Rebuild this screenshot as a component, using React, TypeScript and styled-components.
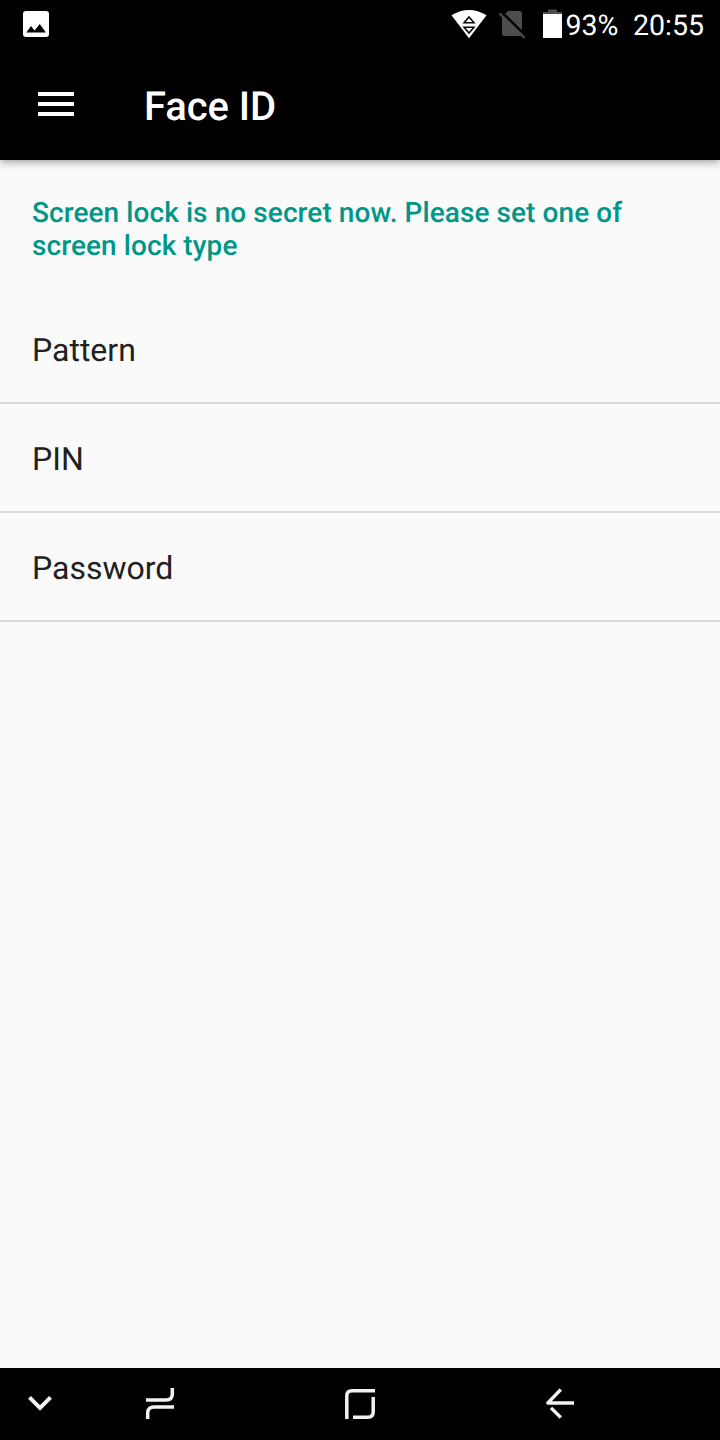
import React from "react";
import styled, { createGlobalStyle } from "styled-components";

const GlobalStyle = createGlobalStyle`
  * { box-sizing: border-box; }
  body {
    margin: 0;
    background: #fafafa;
    font-family: Roboto, sans-serif;
    text-rendering: geometricPrecision;
  }
  svg { display: block; flex: none; }
`;

const Screen = styled.div`
  display: flex;
  flex-direction: column;
  width: 720px;
  height: 1440px;
  overflow: hidden;
  background: #fafafa;
`;

const Header = styled.header`
  flex: none;
  height: 160px;
  background: #000;
  color: #fff;
  box-shadow: 0 2px 8px rgba(0, 0, 0, 0.38);
`;

const StatusBar = styled.div`
  display: flex;
  justify-content: space-between;
  height: 48px;
  padding: 0 16px 0 23px;
`;

const StatusGroup = styled.div`
  display: flex;
`;

const StatusText = styled.span<{ $width: number }>`
  width: ${(p) => p.$width}px;
  font-size: 28.5px;
  line-height: 52px;
  text-align: right;
  white-space: nowrap;
`;

const Toolbar = styled.div`
  display: flex;
  height: 112px;
  padding-left: 38px;
`;

const MenuButton = styled.button`
  display: flex;
  width: 106px;
  padding: 44px 0 0;
  border: 0;
  background: none;
`;

const Title = styled.h1`
  margin: 0;
  font-size: 40px;
  font-weight: 500;
  line-height: 118px;
  letter-spacing: -0.1px;
`;

const Content = styled.main`
  flex: 1;
`;

const Notice = styled.p`
  margin: 0;
  height: 135px;
  padding: 36px 32px 0;
  color: #009688;
  font-size: 28px;
  font-weight: 500;
  line-height: 33px;
  letter-spacing: 0.08px;
`;

const Option = styled.div`
  height: 109px;
  padding-left: 32px;
  border-bottom: 2px solid #dadada;
  color: #212121;
  font-size: 32px;
  line-height: 110px;
`;

const NavBar = styled.nav`
  display: grid;
  grid-template-columns: 80px 160px 240px 160px;
  flex: none;
  height: 72px;
  background: #000;
`;

const NavButton = styled.button`
  display: flex;
  justify-content: center;
  padding: 0;
  border: 0;
  background: none;
`;

const PictureIcon = () => (
  <svg width="26" height="48" viewBox="0 0 26 48">
    <rect y="11" width="26" height="26" rx="3" fill="#fff" />
    <path d="M3.3 32.5 8 26l3.5 4.5L16.8 24l6 8.5Z" fill="#000" />
  </svg>
);

const WifiIcon = () => (
  <svg width="36" height="48" viewBox="0 0 36 48">
    <path d="M.5 15.2Q18 4.8 35.5 15.2L18 38.3Z" fill="#fff" />
    <path d="M13 22.8 18 17l5 5.8ZM13 27.2h10l-5 5.8Z" fill="#fff" stroke="#000" strokeWidth="1.5" />
  </svg>
);

const NoSimIcon = () => (
  <svg width="28" height="48" viewBox="0 0 28 48">
    <path d="M11 11h11.5q2.5 0 2.5 2.5v20q0 2.5-2.5 2.5h-15Q5 36 5 33.5V17Z" fill="#4d4d4d" />
    <path d="m4.2 11.7 25 24.5" stroke="#000" strokeWidth="2.6" />
    <path d="m2.4 13.3 25 24.5" stroke="#4d4d4d" strokeWidth="2.2" />
  </svg>
);

const BatteryIcon = () => (
  <svg width="19" height="48" viewBox="0 0 19 48">
    <path d="M5 9.5h9V12h5v2H0v-2h5Z" fill="#4d4d4d" />
    <path d="M0 14h19v24H0Z" fill="#fff" />
  </svg>
);

const MenuIcon = () => (
  <svg width="36" height="24" viewBox="0 0 36 24" fill="#fff">
    <path d="M0 0h36v4H0ZM0 10h36v4H0ZM0 20h36v4H0Z" />
  </svg>
);

const NavIcon = ({ d, width = 3.5, round }: { d: string; width?: number; round?: boolean }) => (
  <svg
    width="40"
    height="72"
    viewBox="0 0 40 72"
    fill="none"
    stroke="#f2f2f2"
    strokeWidth={width}
    strokeLinejoin={round ? "round" : "miter"}
  >
    <path d={d} />
  </svg>
);

const IconGap = styled.div<{ $before: number }>`
  margin-left: ${(p) => p.$before}px;
`;

const options = ["Pattern", "PIN", "Password"];

export default function App() {
  return (
    <Screen>
      <GlobalStyle />
      <Header>
        <StatusBar>
          <PictureIcon />
          <StatusGroup>
            <WifiIcon />
            <IconGap $before={10}><NoSimIcon /></IconGap>
            <IconGap $before={18}><BatteryIcon /></IconGap>
            <StatusText $width={56.5}>93%</StatusText>
            <StatusText $width={85.5}>20:55</StatusText>
          </StatusGroup>
        </StatusBar>
        <Toolbar>
          <MenuButton aria-label="Menu"><MenuIcon /></MenuButton>
          <Title>Face ID</Title>
        </Toolbar>
      </Header>
      <Content>
        <Notice>Screen lock is no secret now. Please set one of screen lock type</Notice>
        {options.map((name) => (
          <Option key={name}>{name}</Option>
        ))}
      </Content>
      <NavBar>
        <NavButton aria-label="Hide"><NavIcon d="m9.5 29.3 10.5 10.5 10.5-10.5" width={4} /></NavButton>
        <NavButton aria-label="Recent apps"><NavIcon d="M6 32h20q6.3 0 6.3-6v-6M34 39H14q-6.3 0-6.3 6v6" /></NavButton>
        <NavButton aria-label="Home"><NavIcon d="M6.8 51V28q0-5.2 5.2-5.2h23M33.2 29v15q0 5.2-5.2 5.2H13" /></NavButton>
        <NavButton aria-label="Back"><NavIcon d="M34 35H7.8L20.8 21.5M11 39.8l9.8 9.7" width={3.3} round /></NavButton>
      </NavBar>
    </Screen>
  );
}
